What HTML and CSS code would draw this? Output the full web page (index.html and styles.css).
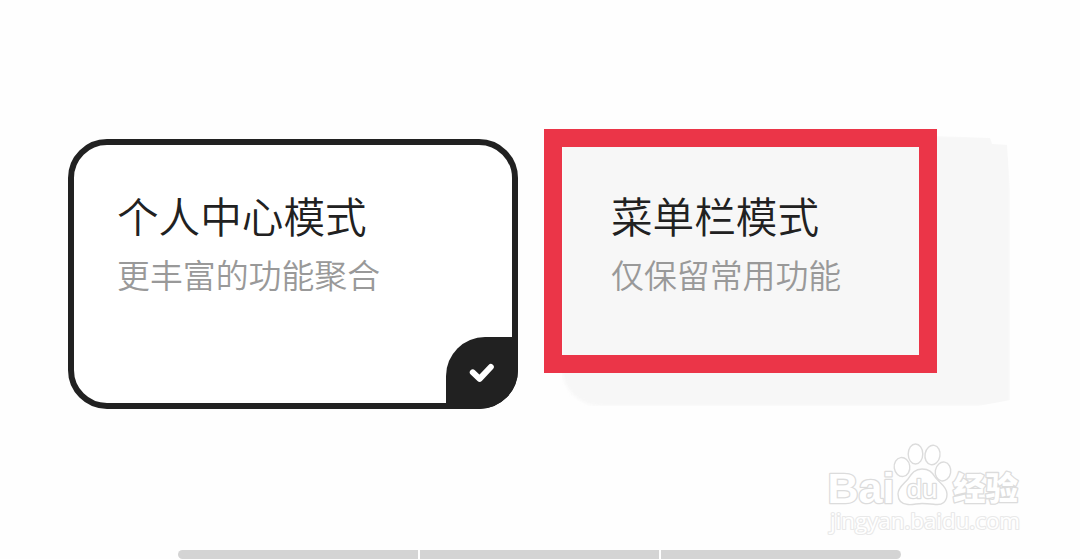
FILE: index.html
```
<!DOCTYPE html>
<html lang="zh-CN">
<head>
	<meta charset="utf-8" />
	<title>个人中心模式</title>
	<link rel="stylesheet" href="styles.css">
</head>
<body>

<div class="modes">
	<div class="card selected">
		<h2>个人中心模式</h2>
		<p>更丰富的功能聚合</p>
		<span class="badge">
			<svg width="72" height="72" viewBox="0 0 72 72"><path d="M26.8 35.4 L33.6 41.9 L44.8 30" fill="none" stroke="#fff" stroke-width="6" stroke-linecap="round" stroke-linejoin="round"/></svg>
		</span>
	</div>
	<div class="card plain">
		<h2>菜单栏模式</h2>
		<p>仅保留常用功能</p>
		<span class="marker"></span>
	</div>
</div>

<svg class="watermark" width="230" height="115" viewBox="0 0 230 115">
	<g fill="#fff" stroke="#dcdcdc" stroke-width="1.4">
		<text class="logo" x="17.5" y="72.5" textLength="67" lengthAdjust="spacingAndGlyphs">Bai</text>
		<ellipse cx="92" cy="37" rx="7.8" ry="9.5" transform="rotate(-8 92 37)"/>
		<ellipse cx="105.5" cy="24" rx="7.3" ry="10"/>
		<ellipse cx="122.5" cy="25" rx="7.5" ry="9.8" transform="rotate(10 122.5 25)"/>
		<ellipse cx="133" cy="41.5" rx="7.7" ry="9.5" transform="rotate(10 133 41.5)"/>
		<path d="M112 39 C119 39 122 42 125 47 C128 52 137 56 137 64 C137 72 132 75 126 74.5 C121 74 117 73.5 112 73.5 C107 73.5 103 75 98 74.5 C91 74 88 70 88 64 C88 57 94 54 98 49 C102 43 105 39 112 39 Z"/>
		<text class="du" x="96.5" y="68" textLength="31" lengthAdjust="spacingAndGlyphs">du</text>
		<text class="cn" x="143" y="70" textLength="65" lengthAdjust="spacingAndGlyphs">经验</text>
		<text class="url" x="20" y="98.5" textLength="190" lengthAdjust="spacingAndGlyphs">jingyan.baidu.com</text>
	</g>
</svg>

<div class="bar"><i></i><i></i><i></i></div>

</body>
</html>
```
FILE: styles.css
```
	body {
	margin: 0;
	height: 559px;
	background: #fefefe;
	font-family: "Noto Sans CJK SC", sans-serif;
	display: flex;
	flex-direction: column;
	overflow: hidden;
	position: relative;
	}

	.modes {
	display: flex;
	gap: 44px;
	padding: 139px 0 0 68px;
	}

	.card {
	position: relative;
	box-sizing: border-box;
	width: 450px;
	height: 270px;
	padding: 47px 0 0 49px;
	}

	.selected {
	padding: 41px 0 0 43px;
	background: #fff;
	border: 6px solid #212121;
	border-radius: 39px;
	}

	/* uneven soft edge behind the second card */
	.plain::before {
	content: "";
	position: absolute;
	z-index: -1;
	left: 0;
	top: -3px;
	width: 448px;
	height: 270px;
	background: #f7f7f7;
	border-radius: 0 0 0 38px;
	clip-path: polygon(0 8px, 375px 0, 428px 2px, 430px 8px, 445px 9px, 448px 55px, 448px 264px, 416px 270px, 0 270px);
	filter: blur(1.5px);
	}

	h2 {
	margin: 0;
	font-size: 41.6px;
	line-height: 58px;
	font-weight: 350;
	color: #212121;
	}

	p {
	margin: 6px 0 0;
	font-size: 32.9px;
	line-height: 48px;
	font-weight: 350;
	color: #999;
	}

	.badge {
	position: absolute;
	right: -6px;
	bottom: -6px;
	width: 72px;
	height: 72px;
	background: #212121;
	border-radius: 39px 0 39px 0;
	}

	.badge svg {display: block;}

	.marker {
	position: absolute;
	left: -18px;
	top: -10px;
	box-sizing: border-box;
	width: 393px;
	height: 244px;
	border: 18px solid #eb3548;
	}

	.watermark {
	position: absolute;
	left: 810px;
	top: 430px;
	}

	.watermark text {
	paint-order: stroke;
	stroke-width: 2.6px;
	stroke-linejoin: round;
	}

	.logo {font: bold 43px "Liberation Sans", sans-serif;}

	.watermark .du {
	font: 26px "Liberation Sans", sans-serif;
	stroke-width: 2.4px;
	}

	.cn {font: 900 32px "Noto Sans CJK SC", sans-serif;}

	.watermark .url {
	font: 21px "Open Sans", sans-serif;
	stroke: #e9e9e9;
	stroke-width: 2.2px;
	}

	.bar {
	display: flex;
	gap: 2px;
	width: 723px;
	height: 9px;
	margin: auto 0 0 178px;
	border-radius: 5px;
	overflow: hidden;
	}

	.bar i {
	flex: 1;
	background: #d4d4d4;
	}
```
